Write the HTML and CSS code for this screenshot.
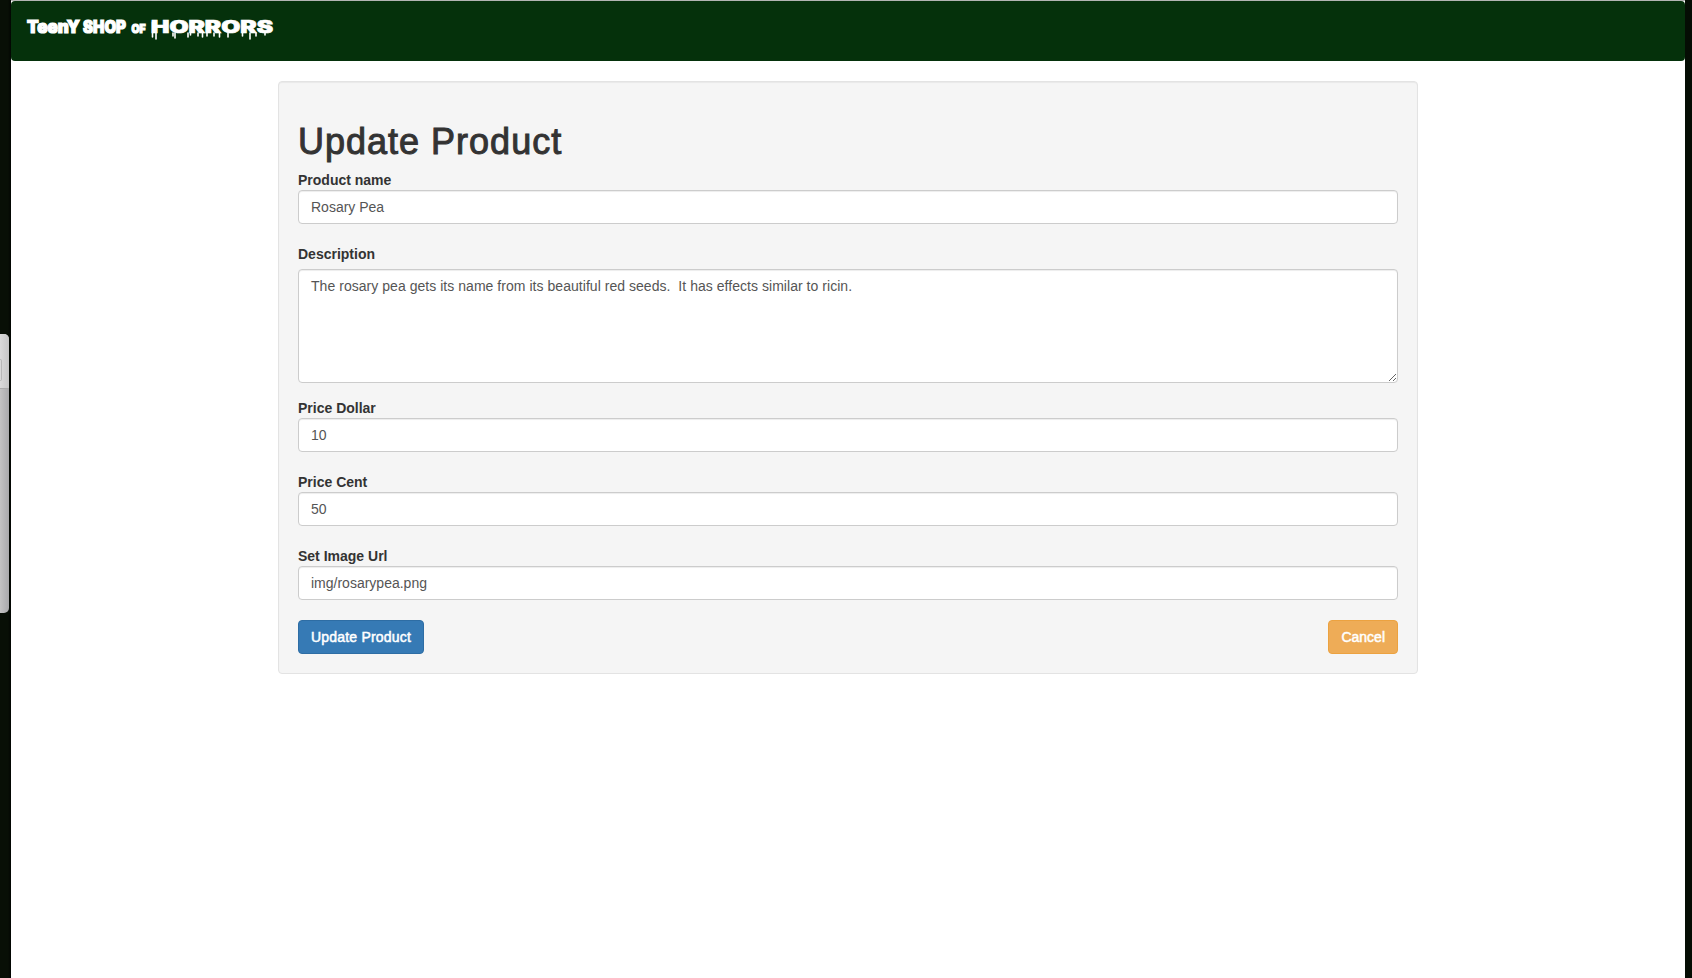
FILE: index.html
```html
<!DOCTYPE html>
<html lang="en">
<head>
<meta charset="utf-8">
<title>Update Product</title>
<link rel="stylesheet" href="styles.css">
</head>
<body>
<div class="back-window"><div class="back-toolbar"><span class="back-button"></span></div></div>
<div class="page">
  <nav class="navbar">
    <svg class="logo" width="250" height="30" viewBox="0 0 250 30" role="img" aria-label="Teeny Shop of Horrors">
      <g class="logo-text">
        <text x="1" y="16.500" font-size="17" textLength="53" lengthAdjust="spacingAndGlyphs">TeenY</text>
        <text x="57" y="16.500" font-size="17" textLength="43" lengthAdjust="spacingAndGlyphs">SHOP</text>
        <text x="105.500" y="16.500" font-size="11.500" textLength="14" lengthAdjust="spacingAndGlyphs">OF</text>
        <text class="logo-wide" x="125" y="17" font-size="17" textLength="122" lengthAdjust="spacingAndGlyphs">HORRORS</text>
      </g>
      <path class="drips" d="M126.500 6v15M130 17v6M147 17v3M149 17v5M162 17v4M164.500 17v2M172 17v3M176.500 17v4M181 17v3M188 17v3M193.500 17v4M202 17v4M216.500 17v3M224 17v6M230 17v3M239 17v2"/>
    </svg>
  </nav>
  <main class="well">
    <h1 class="title">Update Product</h1>
    <form class="form">
      <div class="field"><label class="label" for="name">Product name</label><input class="control" id="name" value="Rosary Pea"></div>
      <div class="field field-area"><label class="label" for="desc">Description</label><textarea class="control area" id="desc" rows="5">The rosary pea gets its name from its beautiful red seeds.  It has effects similar to ricin.</textarea></div>
      <div class="field"><label class="label" for="dollar">Price Dollar</label><input class="control" id="dollar" value="10"></div>
      <div class="field"><label class="label" for="cent">Price Cent</label><input class="control" id="cent" value="50"></div>
      <div class="field"><label class="label" for="url">Set Image Url</label><input class="control" id="url" value="img/rosarypea.png"></div>
      <div class="actions"><button class="btn primary" type="button">Update Product</button><button class="btn warning" type="button">Cancel</button></div>
    </form>
  </main>
</div>
</body>
</html>
```
FILE: styles.css
```css
* { box-sizing: border-box; }
body {
  margin: 0;
  padding: 0 7px 0 11px;
  height: 100vh;
  overflow: hidden;
  background: linear-gradient(90deg, #080f06 0 8px, #020502 11px, #050d04 1685px);
  font: 14px/20px "Helvetica Neue", Helvetica, "Liberation Sans", Arial, sans-serif;
  color: #333;
}
.back-window {
  position: absolute;
  left: 0;
  top: 334px;
  width: 9px;
  height: 279px;
  overflow: hidden;
  border-radius: 0 5px 5px 0;
  background: linear-gradient(90deg, #c3c3c3, #a9a9ab);
}
.back-toolbar {
  height: 55px;
  padding-top: 25px;
  border-bottom: 1px solid #aaa;
  background: linear-gradient(90deg, #dadada, #c6c6c6);
}
.back-button {
  display: block;
  width: 2px;
  height: 22px;
  border: 1px solid #b7b7b7;
  border-left: 0;
  border-radius: 0 2px 2px 0;
}
.page {
  height: 100%;
  background: #fff;
  border-top: 1px solid #b3b5b3;
}
.navbar {
  height: 60px;
  padding: 15px;
  margin-bottom: 20px;
  border-radius: 4px;
  background: #05310b;
}
.logo { display: block; overflow: visible; }
.logo-text {
  font-family: Inter, "Liberation Sans", sans-serif;
  font-weight: 900;
  fill: #fff;
  stroke: #fff;
  stroke-width: 1.2;
}
.logo-wide { stroke-width: .7; }
.drips { fill: none; stroke: #fff; stroke-width: 1.6; stroke-linecap: round; }
.well {
  width: 1140px;
  height: 593px;
  margin: 0 auto;
  padding: 40px 19px 19px;
  border: 1px solid #e3e3e3;
  border-radius: 4px;
  background: #f5f5f5;
  box-shadow: inset 0 1px 1px rgba(0, 0, 0, .05);
}
.title {
  margin: 0 0 8px;
  font-size: 36px;
  font-weight: 500;
  line-height: 40px;
  letter-spacing: 1px;
  -webkit-text-stroke: 1px #333;
}
.field { margin-bottom: 20px; }
.field-area { margin-bottom: 15px; }
.field-area .label { margin-bottom: 5px; }
.label { display: block; font-weight: 700; }
.control {
  display: block;
  width: 100%;
  height: 34px;
  margin: 0;
  padding: 6px 12px;
  font: inherit;
  color: #555;
  border: 1px solid #ccc;
  border-radius: 4px;
  background: #fff;
  box-shadow: inset 0 1px 1px rgba(0, 0, 0, .075);
}
.area { height: 114px; resize: vertical; letter-spacing: .04px; }
.actions { display: flex; justify-content: space-between; }
.btn {
  height: 34px;
  padding: 6px 12px;
  font: inherit;
  color: #fff;
  border: 1px solid;
  border-radius: 4px;
  -webkit-text-stroke: .5px #fff;
}
.primary { background: #367ab5; border-color: #2e6da4; letter-spacing: .2px; }
.warning { background: #eeac57; border-color: #eca240; }
```
